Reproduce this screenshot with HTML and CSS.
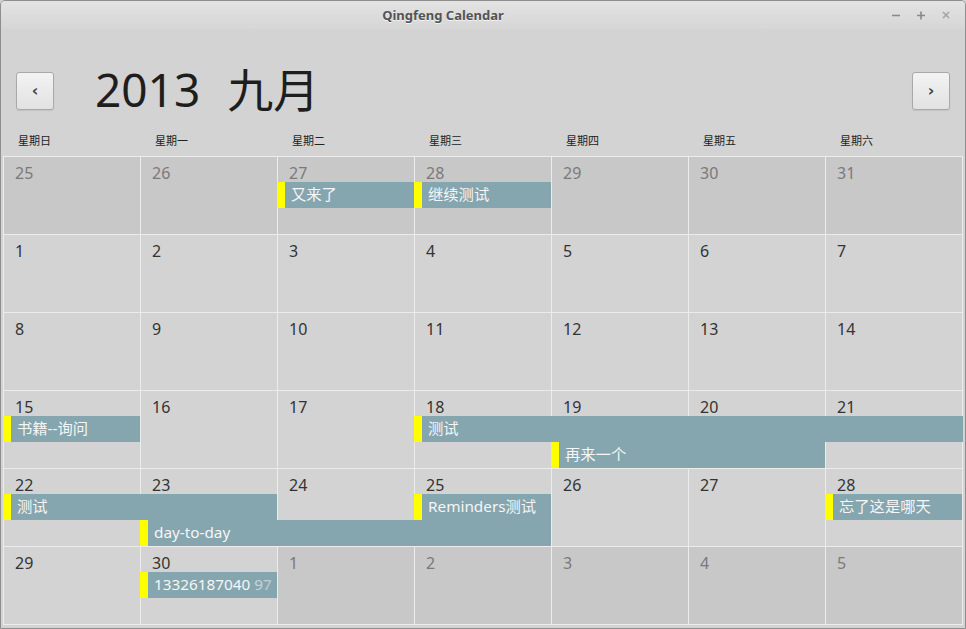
FILE: index.html
```html
<!DOCTYPE html>
<html lang="zh">
<head>
<meta charset="utf-8">
<title>Qingfeng Calendar</title>
<link rel="stylesheet" href="styles.css">
</head>
<body>
<div class="window">
  <div class="titlebar">
    <div class="title">Qingfeng Calendar</div>
    <div class="controls">
      <svg class="ctl" width="10" height="10" viewBox="0 0 10 10"><path d="M1 5.5H9" stroke="#888" stroke-width="1.6"/></svg>
      <svg class="ctl" width="10" height="10" viewBox="0 0 10 10"><path d="M1 5.5H9M5 1.5V9.5" stroke="#888" stroke-width="1.6"/></svg>
      <svg class="ctl" width="10" height="10" viewBox="0 0 10 10"><path d="M2 2L8 8M8 2L2 8" stroke="#a4a4a4" stroke-width="1.6"/></svg>
    </div>
  </div>
  <div class="main">
    <div class="header">
      <button class="nav">‹</button>
      <div class="month"><span>2013</span><span>九月</span></div>
      <button class="nav">›</button>
    </div>
    <div class="weekdays">
      <div>星期日</div><div>星期一</div><div>星期二</div><div>星期三</div><div>星期四</div><div>星期五</div><div>星期六</div>
    </div>
    <div class="grid">
      <div class="cell out">25</div><div class="cell out">26</div><div class="cell out">27</div><div class="cell out">28</div><div class="cell out">29</div><div class="cell out">30</div><div class="cell out">31</div>
      <div class="cell">1</div><div class="cell">2</div><div class="cell">3</div><div class="cell">4</div><div class="cell">5</div><div class="cell">6</div><div class="cell">7</div>
      <div class="cell">8</div><div class="cell">9</div><div class="cell">10</div><div class="cell">11</div><div class="cell">12</div><div class="cell">13</div><div class="cell">14</div>
      <div class="cell">15</div><div class="cell">16</div><div class="cell">17</div><div class="cell">18</div><div class="cell">19</div><div class="cell">20</div><div class="cell">21</div>
      <div class="cell">22</div><div class="cell">23</div><div class="cell">24</div><div class="cell">25</div><div class="cell">26</div><div class="cell">27</div><div class="cell">28</div>
      <div class="cell">29</div><div class="cell">30</div><div class="cell out">1</div><div class="cell out">2</div><div class="cell out">3</div><div class="cell out">4</div><div class="cell out">5</div>

      <div class="event" style="left:274px;top:26px;width:137px">又来了</div>
      <div class="event" style="left:411px;top:26px;width:137px">继续测试</div>
      <div class="event" style="left:0px;top:260px;width:137px">书籍--询问</div>
      <div class="event" style="left:411px;top:260px;width:549px">测试</div>
      <div class="event" style="left:548px;top:286px;width:274px">再来一个</div>
      <div class="event" style="left:0px;top:338px;width:274px">测试</div>
      <div class="event" style="left:411px;top:338px;width:137px">Reminders测试</div>
      <div class="event" style="left:822px;top:338px;width:137px">忘了这是哪天</div>
      <div class="event" style="left:137px;top:364px;width:411px">day-to-day</div>
      <div class="event fade" style="left:137px;top:416px;width:137px">13326187040 97</div>
    </div>
  </div>
</div>
</body>
</html>
```

FILE: styles.css
```css
html, body {
  margin: 0;
  padding: 0;
  background: #d3d3d3;
}
body {
  font-family: "Noto Sans", "Noto Sans CJK SC", sans-serif;
}
.window {
  width: 966px;
  height: 629px;
  box-sizing: border-box;
  border: 1px solid #8e8e8e;
  border-radius: 5px 5px 0 0;
  background: #d3d3d3;
  overflow: hidden;
}
.titlebar {
  height: 28px;
  display: flex;
  align-items: center;
  background: linear-gradient(#e3e3e3, #d6d6d6);
}
.title {
  flex: 1;
  text-align: center;
  font-weight: bold;
  font-size: 13px;
  color: #535353;
  text-shadow: 0 1px 0 #f4f4f4;
  padding-right: 6px;
}
.controls {
  width: 74px;
  display: flex;
  gap: 15px;
}
.ctl {
  display: block;
}
.main {
  position: relative;
}
.header {
  display: flex;
  align-items: center;
  margin-top: 43px;
  padding: 0 15px 0 15px;
  height: 38px;
}
.nav {
  width: 38px;
  height: 38px;
  box-sizing: border-box;
  border: 1px solid #a9a9a9;
  border-radius: 3px;
  background: linear-gradient(#f3f3f3, #e2e2e2);
  box-shadow: 0 1px 1px rgba(0,0,0,0.08);
  font-size: 16px;
  font-weight: bold;
  color: #444;
  padding: 0 0 2px 0;
  font-family: "DejaVu Sans", sans-serif;
}
.month {
  flex: 1;
  display: flex;
  gap: 27px;
  margin-left: 41px;
  margin-bottom: 4px;
  font-size: 46px;
  color: #1e1e1e;
  line-height: 50px;
  font-family: "Noto Sans", "Noto Sans CJK SC", sans-serif;
}
.weekdays {
  display: grid;
  grid-template-columns: repeat(7, 137px);
  margin: 23px 0 0 2px;
  height: 23px;
  font-size: 11px;
  line-height: 15px;
  color: #222;
}
.weekdays div {
  padding-left: 15px;
}
.grid {
  position: relative;
  margin-left: 2px;
  width: 960px;
  box-sizing: border-box;
  display: grid;
  grid-template-columns: repeat(7, 136px);
  grid-template-rows: repeat(6, 77px);
  gap: 1px;
  padding: 1px;
  background: #ececec;
}
.cell {
  background: #d3d3d3;
  color: #333;
  font-size: 16px;
  line-height: 18px;
  padding: 7px 0 0 11px;
}
.cell.out {
  background: #c8c8c8;
  color: #7a7a7a;
}
.event {
  position: absolute;
  height: 26px;
  box-sizing: border-box;
  background: #85a5af;
  border-left: 8px solid #ffff00;
  color: #f6f6f6;
  font-size: 15.3px;
  line-height: 25px;
  padding-left: 6px;
  white-space: nowrap;
  overflow: hidden;
}
.event.fade::after {
  content: "";
  position: absolute;
  right: 0;
  top: 0;
  width: 24px;
  height: 100%;
  background: linear-gradient(to right, rgba(133,165,175,0.35), rgba(133,165,175,0.6));
}
```
